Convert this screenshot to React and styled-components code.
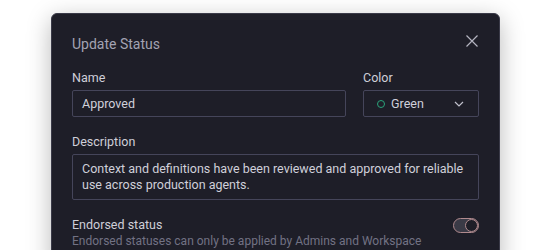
import React from "react";
import styled, { createGlobalStyle } from "styled-components";

const GlobalStyle = createGlobalStyle`
  body {
    margin: 0;
    background: #ffffff;
    font-family: Roboto, "Liberation Sans", sans-serif;
    overflow: hidden;
  }
`;

const Page = styled.div`
  width: 553px;
  height: 250px;
  padding: 13px 0 0 51px;
  box-sizing: border-box;
`;

const Modal = styled.div`
  width: 449px;
  background: #1e1e28;
  border: 1px solid #3a3a48;
  border-radius: 6px;
  box-shadow: 0 6px 24px rgba(0, 0, 0, 0.28);
  padding: 21px 20px 20px;
  box-sizing: border-box;
  color: #d8d8e0;
`;

const Header = styled.div`
  display: flex;
  justify-content: space-between;
  align-items: center;
  height: 18px;
  margin-bottom: 17px;
`;

const Title = styled.h2`
  margin: 0;
  font-size: 14px;
  line-height: 18px;
  font-weight: 400;
  color: #a3a3b2;
`;

const CloseButton = styled.button`
  background: none;
  border: 0;
  padding: 0;
  width: 14px;
  height: 14px;
  margin-top: -6px;
  color: #b4b4c0;
  display: flex;
`;

const Row = styled.div`
  display: flex;
  gap: 17px;
`;

const Field = styled.div`
  display: flex;
  flex-direction: column;
  flex: ${(p) => (p.grow ? 1 : "0 0 auto")};
  width: ${(p) => (p.w ? `${p.w}px` : "auto")};
  margin-bottom: ${(p) => p.mb || 0}px;
`;

const Label = styled.label`
  font-size: 12.5px;
  line-height: 16px;
  color: #cfcfd8;
  margin-bottom: 4px;
`;

const Input = styled.div`
  height: 27px;
  box-sizing: border-box;
  border: 1px solid #45455a;
  border-radius: 2px;
  padding: 0 9px;
  display: flex;
  align-items: center;
  font-size: 12.5px;
  color: #d0d0da;
`;

const Select = styled(Input)`
  padding: 0 14px 0 13px;
  gap: 6px;
`;

const Dot = styled.span`
  width: 8px;
  height: 8px;
  border-radius: 50%;
  border: 1.5px solid #2aa37a;
  box-sizing: border-box;
`;

const SelectText = styled.span`
  flex: 1;
`;

const TextArea = styled.div`
  box-sizing: border-box;
  height: 46px;
  border: 1px solid #45455a;
  border-radius: 2px;
  padding: 6px 9px;
  font-size: 12.5px;
  line-height: 16px;
  color: #d0d0da;
`;

const ToggleRow = styled.div`
  display: flex;
  justify-content: space-between;
  align-items: flex-start;
`;

const ToggleText = styled.div`
  display: flex;
  flex-direction: column;
`;

const ToggleTitle = styled.span`
  font-size: 12.5px;
  line-height: 16px;
  color: #cfcfd8;
`;

const Hint = styled.span`
  font-size: 12px;
  line-height: 16px;
  color: #727284;
`;

const Switch = styled.div`
  width: 26px;
  height: 15px;
  box-sizing: border-box;
  border: 1px solid #b08a8e;
  border-radius: 8px;
  background: #3a3a46;
  display: flex;
  justify-content: flex-end;
  margin-top: 1px;
`;

const Knob = styled.span`
  width: 13px;
  height: 13px;
  box-sizing: border-box;
  border-radius: 50%;
  border: 1px solid #b08a8e;
  background: #1e1e28;
`;

export default function App() {
  return (
    <Page>
      <GlobalStyle />
      <Modal>
        <Header>
          <Title>Update Status</Title>
          <CloseButton aria-label="Close">
            <svg width="14" height="14" viewBox="0 0 14 14">
              <path d="M1.5 1.5L12.5 12.5M12.5 1.5L1.5 12.5" stroke="currentColor" strokeWidth="1.2" />
            </svg>
          </CloseButton>
        </Header>
        <Row>
          <Field grow mb={17}>
            <Label>Name</Label>
            <Input>Approved</Input>
          </Field>
          <Field w={116} mb={17}>
            <Label>Color</Label>
            <Select>
              <Dot />
              <SelectText>Green</SelectText>
              <svg width="10" height="6" viewBox="0 0 10 6">
                <path d="M1 1l4 4 4-4" fill="none" stroke="#c0c0cc" strokeWidth="1.2" />
              </svg>
            </Select>
          </Field>
        </Row>
        <Field mb={17}>
          <Label>Description</Label>
          <TextArea>
            Context and definitions have been reviewed and approved for reliable use across
            production agents.
          </TextArea>
        </Field>
        <ToggleRow>
          <ToggleText>
            <ToggleTitle>Endorsed status</ToggleTitle>
            <Hint>Endorsed statuses can only be applied by Admins and Workspace</Hint>
          </ToggleText>
          <Switch>
            <Knob />
          </Switch>
        </ToggleRow>
      </Modal>
    </Page>
  );
}
